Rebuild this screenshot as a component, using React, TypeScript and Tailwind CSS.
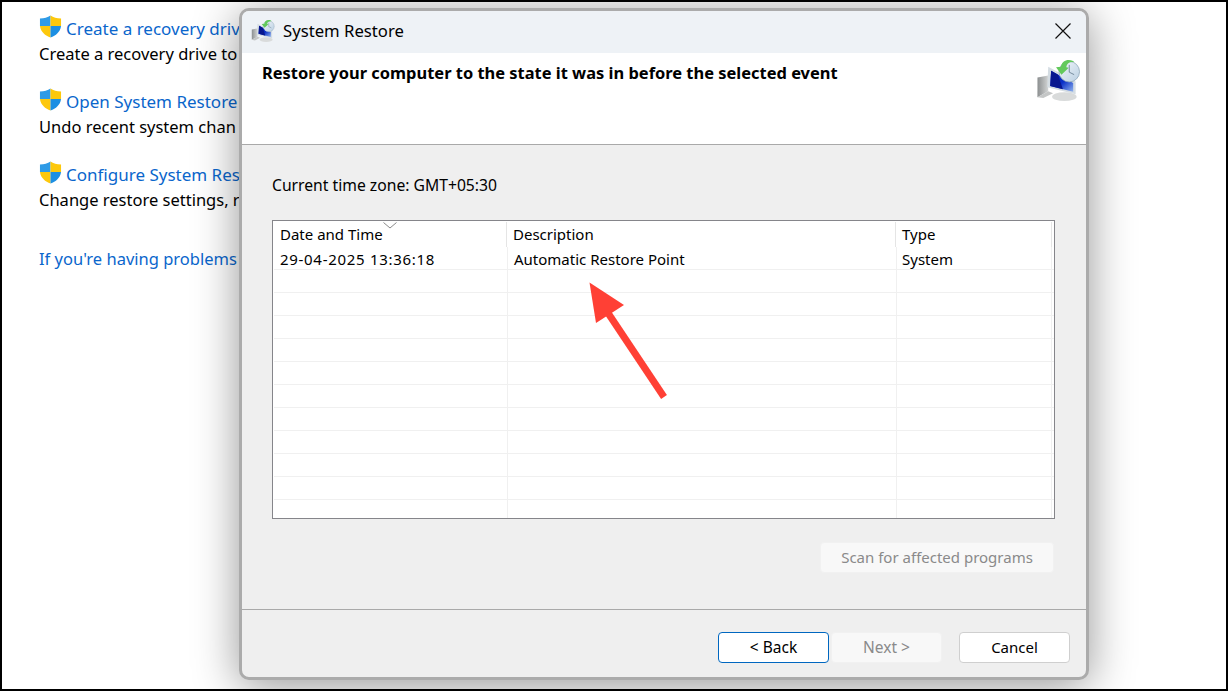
import { useId } from 'react';

const UI_FONT = "font-['Noto_Sans','Open_Sans',sans-serif]";

// the dialog covers the rest of these lines in the screenshot
const links = [
  { title: 'Create a recovery driv', desc: 'Create a recovery drive to' },
  { title: 'Open System Restore', desc: 'Undo recent system chan' },
  { title: 'Configure System Rest', desc: 'Change restore settings, r' },
];

function Shield() {
  return (
    <svg width="23" height="23" viewBox="0 0 23 24" className="shrink-0 -translate-y-0.5">
      <path d="M11.5 0.5C8.5 2.6 5 3.5 0.5 3.6V11.5L11.5 11.5Z" fill="#2f9be6" />
      <path d="M11.5 0.5C14.5 2.6 18 3.5 22.5 3.6V11.5L11.5 11.5Z" fill="#fdc80c" />
      <path d="M0.5 11.5H11.5V23.5C6 21.5 1.4 18 0.5 11.5Z" fill="#fdc80c" />
      <path d="M22.5 11.5H11.5V23.5C17 21.5 21.6 18 22.5 11.5Z" fill="#1c8fe3" />
    </svg>
  );
}

function RestoreIcon({ size }: { size: number }) {
  const id = useId();
  return (
    <svg width={size} height={size} viewBox="0 0 45 46" className="shrink-0">
      <defs>
        <linearGradient id={`${id}s`} x1="0" y1="0" x2="1" y2="1">
          <stop offset="0" stopColor="#0a1fb5" />
          <stop offset="0.55" stopColor="#0a30c8" />
          <stop offset="1" stopColor="#8fb2ec" />
        </linearGradient>
        <linearGradient id={`${id}c`} x1="0" y1="0" x2="1" y2="1">
          <stop offset="0" stopColor="#f3f7fb" />
          <stop offset="1" stopColor="#b9cfe2" />
        </linearGradient>
        <linearGradient id={`${id}t`} x1="0" y1="0" x2="1" y2="0">
          <stop offset="0" stopColor="#8c8f90" />
          <stop offset="1" stopColor="#d2d4d4" />
        </linearGradient>
      </defs>
      <path d="M1 20L12 18V34L1 40Z" fill={`url(#${id}t)`} />
      <path d="M1 40L12 34L17 36L7 41Z" fill="#c4c6c6" />
      <ellipse cx="28.5" cy="39.5" rx="12.5" ry="4.5" fill="#d9dbdb" />
      <path d="M12 9L40 24V37L11 30Z" fill="#d5dde3" />
      <path d="M15 13L37.5 25.5V34.5L14 28.5Z" fill={`url(#${id}s)`} />
      <path d="M15 13L22 17L27 32L14 28.5Z" fill="#08178f" />
      <circle cx="33.5" cy="14" r="10.5" fill={`url(#${id}c)`} stroke="#8ea6b8" strokeWidth="0.8" />
      <path d="M33.5 7V14.5L38.5 17" fill="none" stroke="#5d7488" strokeWidth="0.8" />
      <path d="M25 9C25.5 4.5 29 2 33 2C36 2 38 3 39 4.5C35 3.5 31 5 30.5 9.5L33 10L25.5 17L20 9.5Z" fill="#63c95c" />
    </svg>
  );
}

function Row({ cells, header }: { cells: string[]; header?: boolean }) {
  return (
    <div
      className={
        header
          ? 'grid h-[25px] grid-cols-[233px_389px_156px]'
          : 'grid h-[23px] grid-cols-[234px_389px_155px] border-b border-[#f0f0f0]'
      }
    >
      {cells.map((c, i) => (
        <div
          key={i}
          className={`flex items-center text-[15px] text-black ${!header && i === 2 ? 'pl-[5px]' : 'pl-[6px]'} ${
            header ? 'border-r border-[#e5e5e5]' : 'border-r border-[#f0f0f0] pt-[1px]'
          } ${!header && i === 0 ? 'tracking-[0.7px]' : ''}`}
        >
          {c}
        </div>
      ))}
    </div>
  );
}

function Btn({ label, variant }: { label: string; variant?: 'focus' | 'off' }) {
  const look =
    variant === 'focus'
      ? 'bg-white border-[#0067c0] text-black text-[15.5px]'
      : variant === 'off'
        ? 'bg-[#f8f8f8] border-[#f1f1f1] text-[#8a8a8a] text-[15.5px]'
        : 'bg-white border-[#cfcfcf] text-black text-[15px]';
  return <button className={`h-[31px] w-[111px] rounded-[4px] border ${look}`}>{label}</button>;
}

export default function App() {
  const emptyRows = Array.from({ length: 11 }, (_, i) => i);

  return (
    <div className={`relative h-[691px] w-[1228px] overflow-hidden border-2 border-black bg-white ${UI_FONT}`}>
      {/* control panel behind the dialog */}
      <div className="flex w-[238px] flex-col gap-[23px] whitespace-nowrap pl-[37px] pt-[14px] leading-[25px]">
        {links.map((l) => (
          <div key={l.title}>
            <div className="flex items-center gap-[4px] text-[17px] text-[#0a66cc]">
              <Shield />
              <span>{l.title}</span>
            </div>
            <p className="text-[16.5px] text-black">{l.desc}</p>
          </div>
        ))}
        <p className="mt-[11px] text-[16.5px] text-[#0a66cc]">If you're having problems</p>
      </div>

      {/* dialog */}
      <div className="absolute left-[237px] top-[6px] flex h-[672px] w-[850px] flex-col overflow-hidden rounded-[10px] border-[3px] border-[#ababab] bg-[#efefef] shadow-[0_6px_45px_rgba(0,0,0,0.42)]">
        <div className="flex h-[42px] items-center bg-[#eef2f6] pb-[3px] pl-[9px] pr-[15px]">
          <RestoreIcon size={24} />
          <span className="ml-[8px] text-[16.7px] text-black">System Restore</span>
          <svg width="16" height="16" viewBox="0 0 16 16" className="ml-auto">
            <path d="M0.5 0.5L15.5 15.5M15.5 0.5L0.5 15.5" stroke="#111" strokeWidth="1.2" />
          </svg>
        </div>

        <div className="flex h-[92px] items-start justify-between border-b border-[#a9a9a9] bg-white pl-[20px] pr-[5px] pt-[5px]">
          <h1 className="pt-[4px] text-[16.45px] font-bold leading-[22px] text-black">
            Restore your computer to the state it was in before the selected event
          </h1>
          <RestoreIcon size={45} />
        </div>

        <div className="flex flex-1 flex-col px-[30px]">
          <p className="mt-[29px] text-[15.7px] leading-[22px] text-black">Current time zone: GMT+05:30</p>

          <div className="relative mt-[24px] h-[299px] w-[783px] overflow-hidden border border-[#85858a] bg-white pl-[1px] pt-[1px]">
            <Row header cells={['Date and Time', 'Description', 'Type']} />
            <Row cells={['29-04-2025 13:36:18', 'Automatic Restore Point', 'System']} />
            {emptyRows.map((i) => (
              <Row key={i} cells={['', '', '']} />
            ))}
            <svg width="14" height="7" viewBox="0 0 14 7" className="absolute left-[110px] top-[1px]">
              <path d="M0.5 0.5L7 6L13.5 0.5" fill="none" stroke="#8a8a8a" strokeWidth="1" />
            </svg>
          </div>

          <div className="mt-[23px] flex w-[782px] justify-end">
            <button className="h-[31px] w-[234px] rounded-[4px] border border-[#f1f1f1] bg-[#f8f8f8] text-[15px] text-[#8a8a8a]">
              Scan for affected programs
            </button>
          </div>
        </div>

        <div className="flex h-[68px] items-start border-t border-[#a9a9a9] pl-[476px] pt-[22px]">
          <Btn label="< Back" variant="focus" />
          <div className="ml-[2px]">
            <Btn label="Next >" variant="off" />
          </div>
          <div className="ml-[17px]">
            <Btn label="Cancel" />
          </div>
        </div>
      </div>

      {/* red annotation arrow */}
      <svg width="90" height="125" viewBox="0 0 90 125" className="absolute left-[585px] top-[278px]">
        <path d="M2.5 2.5L37 25L9 43Z" fill="#ff4035" />
        <path d="M21 33L77 117" stroke="#ff4035" strokeWidth="7" />
      </svg>
    </div>
  );
}
